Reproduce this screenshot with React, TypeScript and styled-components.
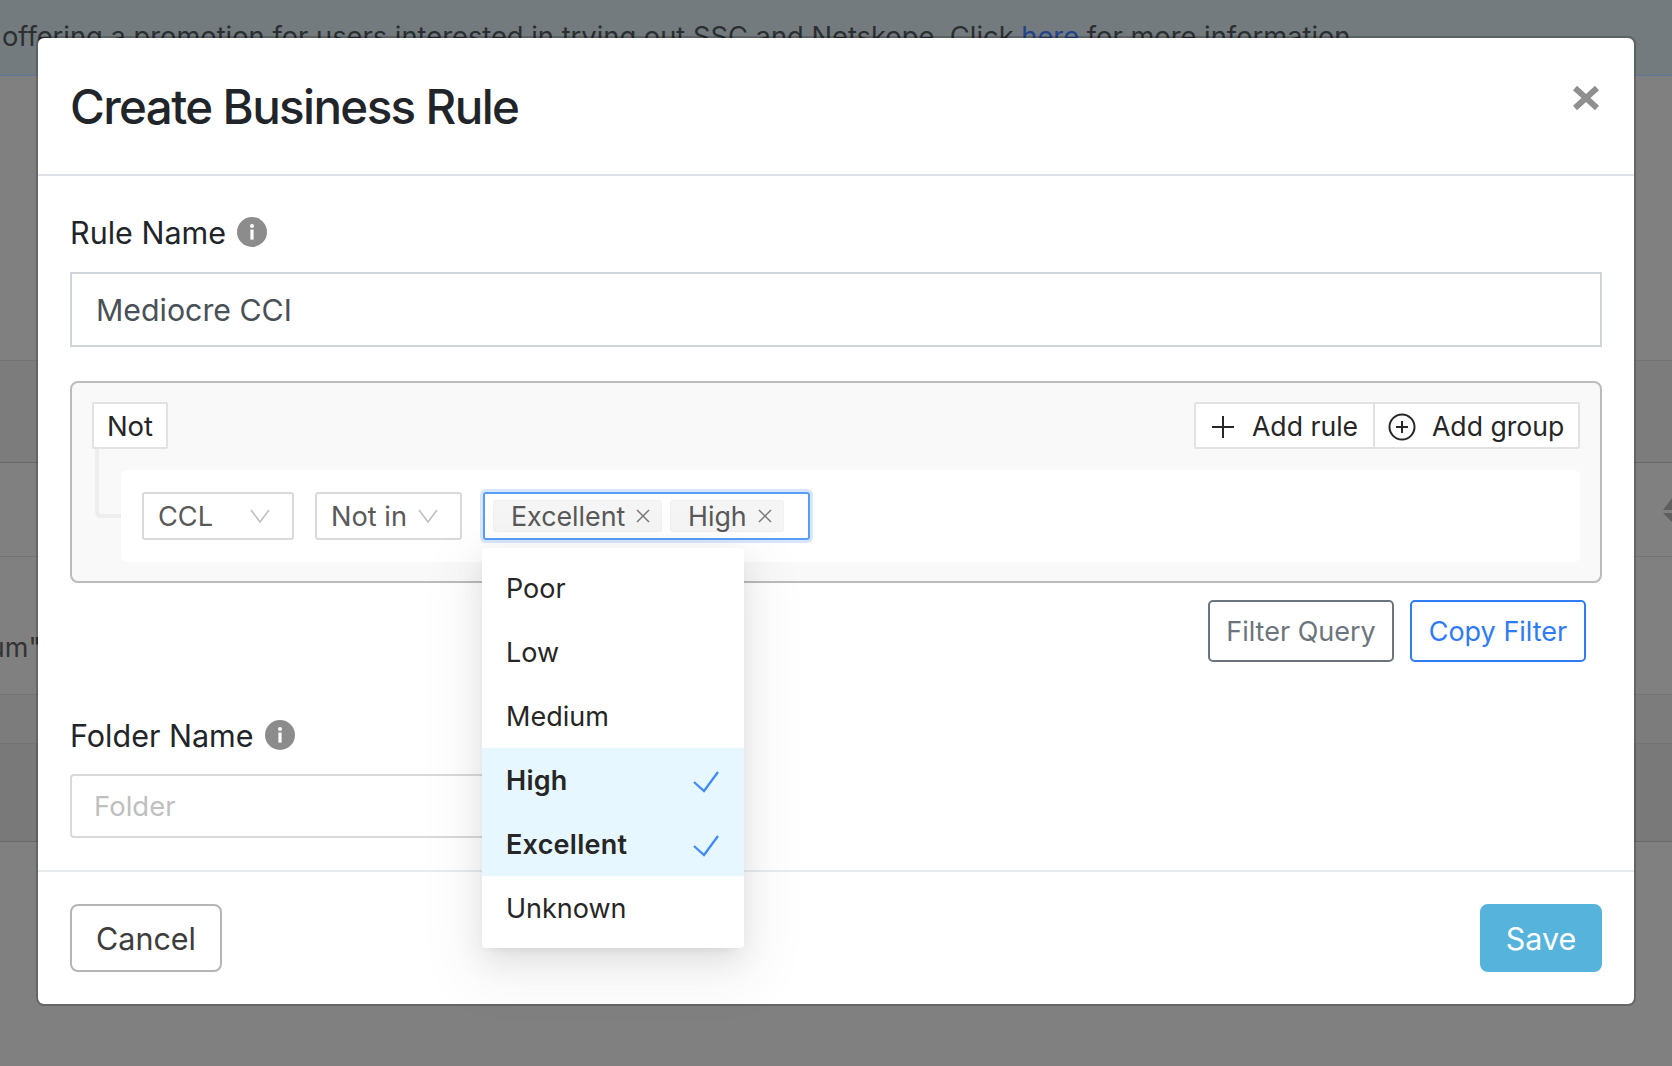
import { ReactNode } from "react";
import styled, { createGlobalStyle } from "styled-components";

const GlobalStyle = createGlobalStyle`
  html, body {
    margin: 0;
    padding: 0;
    width: 1672px;
    height: 1066px;
    overflow: hidden;
    background: #808080;
    font-family: Inter, "Liberation Sans", sans-serif;
  }
  * {
    box-sizing: border-box;
  }
`;

const Page = styled.div`
  position: relative;
  width: 1672px;
  height: 1066px;
  overflow: hidden;
  background: #808080;
`;

const Banner = styled.div`
  height: 76px;
  padding: 21px 0 0 2px;
  background: #737b7e;
  border-bottom: 1px solid #5f7a99;
  color: #2b2f31;
  font-size: 27.3px;
  line-height: 32px;
  white-space: nowrap;
`;

const BannerLink = styled.span`
  color: #23438a;
`;

const TableRow = styled.div<{ $height: number; $tone?: string; $line?: string }>`
  display: flex;
  justify-content: space-between;
  align-items: center;
  height: ${({ $height }) => $height}px;
  background: ${({ $tone }) => $tone || "#808080"};
  border-bottom: 1px solid ${({ $line }) => $line || "#747474"};
`;

const ClippedCell = styled.div`
  display: flex;
  justify-content: flex-end;
  width: 38px;
  padding-top: 44px;
  overflow: hidden;
  color: #333;
  font-size: 27px;
  white-space: nowrap;
`;

const ClippedText = styled.span`
  flex: none;
  margin-right: -3px;
`;

const SortIcon = styled.svg`
  flex: none;
`;

const Modal = styled.div`
  position: absolute;
  left: 36px;
  top: 36px;
  width: 1600px;
  height: 970px;
  display: flex;
  flex-direction: column;
  background: #fff;
  background-clip: padding-box;
  border: 2px solid rgba(0, 0, 0, 0.2);
  border-radius: 8px;
`;

const ModalHeader = styled.div`
  display: flex;
  justify-content: space-between;
  height: 138px;
  padding: 41px 32px 0;
  border-bottom: 2px solid #dee2e6;
`;

const Title = styled.h2`
  margin: 0;
  color: #212529;
  font-size: 47.5px;
  font-weight: 500;
  letter-spacing: -1.62px;
  line-height: 56px;
`;

const CloseIcon = styled.svg`
  margin: 7px 3px 0 0;
`;

const ModalBody = styled.div`
  flex: 1;
  padding: 40px 32px 0;
`;

const FieldLabel = styled.div`
  display: flex;
  align-items: center;
  gap: 11px;
  height: 32px;
  color: #212529;
  font-size: 30.5px;
`;

const RuleInput = styled.div`
  display: flex;
  align-items: center;
  height: 75px;
  margin-top: 24px;
  padding: 1px 24px 0 24px;
  border: 2px solid #ced4da;
  color: #495057;
  font-size: 30.3px;
`;

const QueryBox = styled.div`
  height: 202px;
  margin-top: 34px;
  padding: 19px 20px 0 20px;
  background: #f9f9f9;
  border: 2px solid #bbb;
  border-radius: 8px;
`;

const QueryTop = styled.div`
  display: flex;
  justify-content: space-between;
  position: relative;
`;

const NotButton = styled.div`
  display: flex;
  align-items: center;
  justify-content: center;
  width: 76px;
  height: 47px;
  background: #fff;
  border: 2px solid #e2e2e2;
  border-radius: 2px;
  color: #262626;
  font-size: 27.5px;
`;

const ActionGroup = styled.div`
  display: flex;
  height: 47px;
  background: #fff;
  border: 2px solid #e2e2e2;
  border-radius: 2px;
`;

const ActionButton = styled.div<{ $width: number; $gap: number; $pad: number; $divider?: boolean }>`
  display: flex;
  align-items: center;
  gap: ${({ $gap }) => $gap}px;
  width: ${({ $width }) => $width}px;
  padding-left: ${({ $pad }) => $pad}px;
  border-right: ${({ $divider }) => ($divider ? "2px solid #e2e2e2" : "none")};
  color: #262626;
  font-size: 26.6px;

  svg {
    margin-top: 3px;
    flex: none;
  }
`;

const Connector = styled.div`
  position: absolute;
  left: 3px;
  top: 47px;
  width: 26px;
  height: 69px;
  border-left: 4px solid #eeeeee;
  border-bottom: 4px solid #eeeeee;
  border-bottom-left-radius: 6px;
`;

const RuleRow = styled.div`
  display: flex;
  align-items: center;
  height: 92px;
  margin: 21px 0 0 29px;
  padding: 0 21px;
  background: #fff;
  border-radius: 6px;
`;

const SelectBox = styled.div<{ $width: number; $margin: number; $pad: number }>`
  display: flex;
  align-items: center;
  justify-content: space-between;
  width: ${({ $width }) => $width}px;
  height: 48px;
  margin-right: ${({ $margin }) => $margin}px;
  padding: 0 ${({ $pad }) => $pad}px 0 14px;
  border: 2px solid #d9d9d9;
  border-radius: 3px;
  color: #595959;
  font-size: 27.2px;
`;

const TagSelect = styled.div`
  position: relative;
  display: flex;
  align-items: center;
  gap: 8px;
  width: 327px;
  height: 48px;
  padding-left: 8px;
  border: 2px solid #5a9df5;
  border-radius: 3px;
  box-shadow: 0 0 0 3px #d6e6fb;
  color: #595959;
  font-size: 26.8px;
`;

const Tag = styled.div<{ $width: number }>`
  display: flex;
  align-items: center;
  justify-content: space-between;
  width: ${({ $width }) => $width}px;
  height: 32px;
  padding: 0 11px 0 17px;
  background: #f5f5f5;
  border: 1px solid #f0f0f0;
  border-radius: 3px;
`;

const Dropdown = styled.div`
  position: absolute;
  left: -3px;
  top: 54px;
  z-index: 5;
  width: 262px;
  padding: 8px 0;
  background: #fff;
  border-radius: 4px;
  box-shadow: 0 6px 12px -8px rgba(0, 0, 0, 0.12), 0 12px 32px 0 rgba(0, 0, 0, 0.08),
    0 18px 56px 16px rgba(0, 0, 0, 0.05);
`;

const Option = styled.div<{ $selected?: boolean }>`
  display: flex;
  align-items: center;
  justify-content: space-between;
  height: 64px;
  padding: 0 25px 0 24px;
  background: ${({ $selected }) => ($selected ? "#e6f7ff" : "transparent")};
  color: #262626;
  font-size: 27px;
  font-weight: ${({ $selected }) => ($selected ? 600 : 400)};
  letter-spacing: ${({ $selected }) => ($selected ? "0.25px" : "0")};

  svg {
    margin-top: 3px;
  }
`;

const FilterActions = styled.div`
  display: flex;
  justify-content: flex-end;
  gap: 16px;
  margin: 17px 16px 0 0;
`;

const OutlineButton = styled.div<{ $color: string; $width: number }>`
  display: flex;
  align-items: center;
  justify-content: center;
  width: ${({ $width }) => $width}px;
  height: 62px;
  border: 2px solid ${({ $color }) => $color};
  border-radius: 5px;
  color: ${({ $color }) => $color};
  font-size: 27px;
`;

const FolderLabel = styled(FieldLabel)`
  margin-top: 57px;
`;

const FolderInput = styled.div`
  display: flex;
  align-items: center;
  width: 560px;
  height: 64px;
  margin-top: 23px;
  padding-left: 22px;
  border: 2px solid #d9d9d9;
  border-radius: 4px;
  color: #bfbfbf;
  font-size: 27.5px;
`;

const ModalFooter = styled.div`
  display: flex;
  justify-content: space-between;
  height: 134px;
  padding: 32px 32px 0;
  border-top: 2px solid #e9ecef;
`;

const FooterButton = styled.div<{ $primary?: boolean }>`
  display: flex;
  align-items: center;
  justify-content: center;
  width: ${({ $primary }) => ($primary ? 122 : 152)}px;
  height: 68px;
  background: ${({ $primary }) => ($primary ? "#56b3dc" : "#fff")};
  border: ${({ $primary }) => ($primary ? "none" : "2px solid #b5b5b5")};
  border-radius: 8px;
  color: ${({ $primary }) => ($primary ? "#fff" : "#3d3d3d")};
  font-size: 30.5px;
`;

function InfoIcon() {
  return (
    <svg width="30" height="30" viewBox="0 0 30 30">
      <circle cx="15" cy="15" r="15" fill="#8c8c8c" />
      <circle cx="15" cy="9" r="2" fill="#fff" />
      <rect x="13.4" y="12.6" width="3.2" height="10" fill="#fff" />
    </svg>
  );
}

function Chevron() {
  return (
    <svg width="20" height="14" viewBox="0 0 20 14" fill="none" stroke="#bfbfbf" strokeWidth="1.6">
      <path d="M1 1l9 12 9-12" />
    </svg>
  );
}

function TagClose() {
  return (
    <svg width="14" height="14" viewBox="0 0 14 14" fill="none" stroke="#7a7a7a" strokeWidth="1.5">
      <path d="M1 1l12 12M13 1L1 13" />
    </svg>
  );
}

function Check() {
  return (
    <svg width="26" height="22" viewBox="0 0 26 22" fill="none" stroke="#3f8cf6" strokeWidth="2.3">
      <path d="M1 11l10 9L25 1" />
    </svg>
  );
}

function Label({ children }: { children: ReactNode }) {
  return (
    <FieldLabel>
      {children}
      <InfoIcon />
    </FieldLabel>
  );
}

const options = [
  { name: "Poor" },
  { name: "Low" },
  { name: "Medium" },
  { name: "High", selected: true },
  { name: "Excellent", selected: true },
  { name: "Unknown" },
];

export default function App() {
  return (
    <Page>
      <GlobalStyle />
      <Banner>
        offering a promotion for users interested in trying out SSC and Netskope. Click{" "}
        <BannerLink>here</BannerLink> for more information.
      </Banner>
      <TableRow $height={285} />
      <TableRow $height={102} $tone="#7c7c7c" $line="#6a6a6a" />
      <TableRow $height={94}>
        <span />
        <SortIcon width="9" height="24" viewBox="0 0 9 24" fill="#5e5e5e">
          <path d="M9 0v12H0zM9 24V15H0z" />
        </SortIcon>
      </TableRow>
      <TableRow $height={138}>
        <ClippedCell>
          <ClippedText>"medium"</ClippedText>
        </ClippedCell>
      </TableRow>
      <TableRow $height={49} $tone="#7c7c7c" />
      <TableRow $height={98} $tone="#797979" $line="#696969" />

      <Modal>
        <ModalHeader>
          <Title>Create Business Rule</Title>
          <CloseIcon width="26" height="24" viewBox="0 0 26 24" stroke="#8f8f8f" strokeWidth="6">
            <path d="M2 2l22 20M24 2L2 22" />
          </CloseIcon>
        </ModalHeader>
        <ModalBody>
          <Label>Rule Name</Label>
          <RuleInput>Mediocre CCI</RuleInput>
          <QueryBox>
            <QueryTop>
              <NotButton>Not</NotButton>
              <Connector />
              <ActionGroup>
                <ActionButton $width={179} $gap={17} $pad={15} $divider>
                  <svg width="24" height="24" viewBox="0 0 24 24" stroke="#262626" strokeWidth="2">
                    <path d="M12 1v22M1 12h22" />
                  </svg>
                  Add rule
                </ActionButton>
                <ActionButton $width={203} $gap={16} $pad={13}>
                  <svg width="28" height="28" viewBox="0 0 28 28" fill="none" stroke="#262626" strokeWidth="2">
                    <circle cx="14" cy="14" r="12.5" />
                    <path d="M14 8v12M8 14h12" />
                  </svg>
                  Add group
                </ActionButton>
              </ActionGroup>
            </QueryTop>
            <RuleRow>
              <SelectBox $width={152} $margin={21} $pad={22}>
                CCL
                <Chevron />
              </SelectBox>
              <SelectBox $width={147} $margin={21} $pad={22}>
                Not in
                <Chevron />
              </SelectBox>
              <TagSelect>
                <Tag $width={169}>
                  Excellent
                  <TagClose />
                </Tag>
                <Tag $width={114}>
                  High
                  <TagClose />
                </Tag>
                <Dropdown>
                  {options.map((option) => (
                    <Option key={option.name} $selected={option.selected}>
                      {option.name}
                      {option.selected && <Check />}
                    </Option>
                  ))}
                </Dropdown>
              </TagSelect>
            </RuleRow>
          </QueryBox>
          <FilterActions>
            <OutlineButton $color="#6c757d" $width={186}>
              Filter Query
            </OutlineButton>
            <OutlineButton $color="#2f7bf5" $width={176}>
              Copy Filter
            </OutlineButton>
          </FilterActions>
          <FolderLabel>
            Folder Name
            <InfoIcon />
          </FolderLabel>
          <FolderInput>Folder</FolderInput>
        </ModalBody>
        <ModalFooter>
          <FooterButton>Cancel</FooterButton>
          <FooterButton $primary>Save</FooterButton>
        </ModalFooter>
      </Modal>
    </Page>
  );
}
